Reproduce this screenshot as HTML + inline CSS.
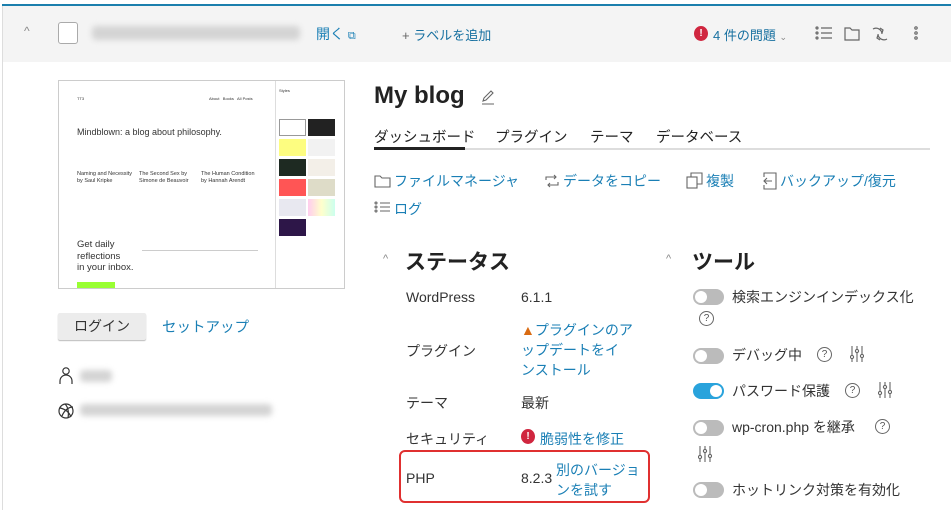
<!DOCTYPE html>
<html><head><meta charset="utf-8"><style>
*{margin:0;padding:0;box-sizing:border-box}
body{width:951px;height:510px;overflow:hidden;background:#fff;font-family:"Liberation Sans","Noto Sans CJK JP",sans-serif;color:#333;font-size:14px;position:relative}
.a{position:absolute;white-space:nowrap}
.l{color:#1a7fb5}
.blur{background:#d4d4d4;filter:blur(3px);border-radius:4px}
.tg{position:absolute;width:31px;height:16px;border-radius:8px;background:#bbb}
.tg::after{content:"";position:absolute;left:2px;top:2px;width:12px;height:12px;border-radius:50%;background:#fff}
.tg.on{background:#29a3dc}.tg.on::after{left:17px}
.q{position:absolute;width:15px;height:15px;border:1.2px solid #666;border-radius:50%;font-size:10px;line-height:13px;text-align:center;color:#555}
</style></head><body>
<div class="a" style="left:2px;top:4px;width:949px;height:2px;background:#1b7fad"></div>
<div class="a" style="left:2px;top:6px;width:949px;height:56px;background:#f4f4f4"></div>
<div class="a" style="left:2px;top:6px;width:1px;height:504px;background:#ddd"></div>
<div class="a" style="left:24px;top:24px;color:#888;font-size:12px">^</div>
<div class="a" style="left:58px;top:22px;width:20px;height:22px;border:1px solid #aaa;border-radius:3px;background:#fff"></div>
<div class="a blur" style="left:92px;top:26px;width:208px;height:14px"></div>
<div class="a l" style="left:316px;top:24px">開く <span style="font-size:11px">⧉</span></div>
<div class="a" style="left:402px;top:25px;font-size:13px"><span style="color:#666">+</span> <span class="l" style="color:#1770a0">ラベルを追加</span></div>
<div class="a" style="left:694px;top:26px;width:14px;height:15px;border-radius:50%;background:#d0263f;color:#fff;font-size:10px;text-align:center;line-height:15px;font-weight:bold">!</div>
<div class="a" style="left:713px;top:25px;font-size:13px;color:#1770a0">4 件の問題 <span style="color:#888;font-size:9px">⌄</span></div>
<svg class="a" style="left:814px;top:24px" width="105" height="20" fill="none" stroke="#666" stroke-width="1.2">
<circle cx="3" cy="4" r="1"/><circle cx="3" cy="9" r="1"/><circle cx="3" cy="14" r="1"/><path d="M7 4h11M7 9h11M7 14h11"/>
<path d="M31 4h5l2 2h7v10h-14z"/>
<path d="M59 5a6 6 0 0 1 9 5M73 15a6 6 0 0 1-9-5M66 4l3 2-1 3M66 16l-3-2 1-3"/>
<circle cx="102" cy="4" r="1.2"/><circle cx="102" cy="9" r="1.2"/><circle cx="102" cy="14" r="1.2"/>
</svg>
<!-- thumbnail -->
<div class="a" style="left:58px;top:80px;width:287px;height:209px;border:1px solid #ccc;background:#fff;overflow:hidden">
<div class="a" style="left:18px;top:15px;font-size:4px;color:#333">TT3</div>
<div class="a" style="left:150px;top:15px;font-size:4px;color:#333">About &nbsp; Books &nbsp; All Posts</div>
<div class="a" style="left:18px;top:46px;font-size:9px;color:#333">Mindblown: a blog about philosophy.</div>
<div class="a" style="left:18px;top:90px;font-size:5.5px;line-height:7px;color:#333">Naming and Necessity<br>by Saul Kripke</div>
<div class="a" style="left:80px;top:90px;font-size:5.5px;line-height:7px;color:#333">The Second Sex by<br>Simone de Beauvoir</div>
<div class="a" style="left:142px;top:90px;font-size:5.5px;line-height:7px;color:#333">The Human Condition<br>by Hannah Arendt</div>
<div class="a" style="left:18px;top:158px;font-size:9.5px;line-height:11.5px;color:#333">Get daily<br>reflections<br>in your inbox.</div>
<div class="a" style="left:83px;top:169px;width:116px;height:1px;background:#ccc"></div>
<div class="a" style="left:18px;top:201px;width:38px;height:7px;background:#9f3"></div>
<div class="a" style="left:216px;top:0;width:1px;height:209px;background:#ddd"></div>
<div class="a" style="left:220px;top:7px;font-size:4px">Styles</div>
<div class="a" style="left:220px;top:38px;width:27px;height:17px;border:1px solid #999"></div>
<div class="a" style="left:249px;top:38px;width:27px;height:17px;background:#222"></div>
<div class="a" style="left:220px;top:58px;width:27px;height:17px;background:#fdfd80"></div>
<div class="a" style="left:249px;top:58px;width:27px;height:17px;background:#f2f2f2"></div>
<div class="a" style="left:220px;top:78px;width:27px;height:17px;background:#1e2a22"></div>
<div class="a" style="left:249px;top:78px;width:27px;height:17px;background:#f3efe8"></div>
<div class="a" style="left:220px;top:98px;width:27px;height:17px;background:#f55"></div>
<div class="a" style="left:249px;top:98px;width:27px;height:17px;background:#dedcc8"></div>
<div class="a" style="left:220px;top:118px;width:27px;height:17px;background:#e8e8f0"></div>
<div class="a" style="left:249px;top:118px;width:27px;height:17px;background:linear-gradient(90deg,#fce,#ffc,#cfe)"></div>
<div class="a" style="left:220px;top:138px;width:27px;height:17px;background:#2d1648"></div>
</div>
<div class="a" style="left:58px;top:313px;width:88px;height:27px;background:#ececec;border-radius:2px;box-shadow:0 1px 1px #bbb;text-align:center;line-height:27px;color:#333">ログイン</div>
<div class="a l" style="left:162px;top:316px;font-size:14.5px">セットアップ</div>
<svg class="a" style="left:58px;top:367px" width="16" height="52" fill="none" stroke="#333" stroke-width="1.2"><circle cx="8" cy="4" r="3.2"/><path d="M2 17v-3a6 6 0 0 1 12 0v3"/><circle cx="8" cy="44" r="7"/><path d="M2 41c5 1 9 4 11 9M4 49c2-5 6-9 11-9M7 37c3 3 4 8 3 14"/></svg>
<div class="a blur" style="left:80px;top:370px;width:32px;height:12px"></div>
<div class="a blur" style="left:80px;top:404px;width:192px;height:12px"></div>
<!-- right -->
<div class="a" style="left:374px;top:82px;font-size:24px;font-weight:bold;color:#222">My blog</div>
<svg class="a" style="left:480px;top:89px" width="16" height="16" fill="none" stroke="#666" stroke-width="1.1"><path d="M3 12l1-3 7-7 2 2-7 7zM2 15h12"/></svg>
<div class="a" style="left:374px;top:126px;font-size:14.5px;color:#222">ダッシュボード</div>
<div class="a" style="left:495px;top:126px;font-size:14.5px;color:#222">プラグイン</div>
<div class="a" style="left:590px;top:126px;font-size:14.5px;color:#222">テーマ</div>
<div class="a" style="left:656px;top:126px;font-size:14.5px;color:#222">データベース</div>
<div class="a" style="left:374px;top:148px;width:556px;height:2px;background:#ddd"></div>
<div class="a" style="left:374px;top:147px;width:91px;height:3px;background:#222"></div>
<svg class="a" style="left:374px;top:172px" width="18" height="48" fill="none" stroke="#666" stroke-width="1.1"><path d="M1 4h5l2 2h8v9H1z"/><circle cx="2" cy="31" r="1"/><circle cx="2" cy="35" r="1"/><circle cx="2" cy="39" r="1"/><path d="M6 31h10M6 35h10M6 39h10"/></svg>
<div class="a l" style="left:394px;top:171px">ファイルマネージャ</div>
<svg class="a" style="left:543px;top:172px" width="18" height="18" fill="none" stroke="#666" stroke-width="1.1"><path d="M3 8V5h10M11 3l2 2-2 2M15 10v3H5M7 11l-2 2 2 2"/></svg>
<div class="a l" style="left:563px;top:171px">データをコピー</div>
<svg class="a" style="left:686px;top:172px" width="18" height="18" fill="none" stroke="#666" stroke-width="1.1"><rect x="1" y="5" width="10" height="11"/><path d="M5 5V1h11v11h-5"/></svg>
<div class="a l" style="left:706px;top:171px">複製</div>
<svg class="a" style="left:760px;top:172px" width="18" height="18" fill="none" stroke="#666" stroke-width="1.1"><path d="M4 5V1h12v16H4v-4M12 9H4M7 6L4 9l3 3"/></svg>
<div class="a l" style="left:780px;top:171px">バックアップ/復元</div>
<div class="a l" style="left:394px;top:199px">ログ</div>
<div class="a" style="left:383px;top:253px;color:#888;font-size:11px">^</div>
<div class="a" style="left:405px;top:246px;font-size:21px;font-weight:bold;color:#222">ステータス</div>
<div class="a" style="left:666px;top:253px;color:#888;font-size:11px">^</div>
<div class="a" style="left:692px;top:246px;font-size:21px;font-weight:bold;color:#222">ツール</div>
<div class="a" style="left:406px;top:289px">WordPress</div><div class="a" style="left:521px;top:289px">6.1.1</div>
<div class="a" style="left:406px;top:341px">プラグイン</div>
<div class="a" style="left:521px;top:320px;line-height:20px"><span style="color:#d96b12">▲</span><span class="l">プラグインのア<br>ップデートをイ<br>ンストール</span></div>
<div class="a" style="left:406px;top:393px">テーマ</div><div class="a" style="left:521px;top:393px">最新</div>
<div class="a" style="left:406px;top:429px">セキュリティ</div>
<div class="a" style="left:521px;top:429px;width:14px;height:15px;border-radius:50%;background:#d0263f;color:#fff;font-size:10px;text-align:center;line-height:15px;font-weight:bold">!</div>
<div class="a l" style="left:540px;top:429px">脆弱性を修正</div>
<div class="a" style="left:399px;top:450px;width:251px;height:53px;border:2px solid #e03030;border-radius:6px"></div>
<div class="a" style="left:406px;top:470px">PHP</div><div class="a" style="left:521px;top:470px">8.2.3</div>
<div class="a l" style="left:556px;top:460px;line-height:20px">別のバージョ<br>ンを試す</div>
<div class="tg" style="left:693px;top:289px"></div><div class="a" style="left:732px;top:287px">検索エンジンインデックス化</div>
<div class="q" style="left:699px;top:311px">?</div>
<div class="tg" style="left:693px;top:348px"></div><div class="a" style="left:732px;top:345px">デバッグ中</div><div class="q" style="left:817px;top:347px">?</div>
<svg class="a" style="left:850px;top:345px" width="14" height="18" fill="none" stroke="#666" stroke-width="1.1"><path d="M2 1v16M7 1v16M12 1v16"/><circle cx="2" cy="12" r="1.6" fill="#fff"/><circle cx="7" cy="6" r="1.6" fill="#fff"/><circle cx="12" cy="11" r="1.6" fill="#fff"/></svg>
<div class="tg on" style="left:693px;top:383px"></div><div class="a" style="left:732px;top:381px">パスワード保護</div><div class="q" style="left:845px;top:383px">?</div>
<svg class="a" style="left:878px;top:381px" width="14" height="18" fill="none" stroke="#666" stroke-width="1.1"><path d="M2 1v16M7 1v16M12 1v16"/><circle cx="2" cy="12" r="1.6" fill="#fff"/><circle cx="7" cy="6" r="1.6" fill="#fff"/><circle cx="12" cy="11" r="1.6" fill="#fff"/></svg>
<div class="tg" style="left:693px;top:420px"></div><div class="a" style="left:732px;top:417px">wp-cron.php を継承</div><div class="q" style="left:875px;top:419px">?</div>
<svg class="a" style="left:698px;top:445px" width="14" height="18" fill="none" stroke="#666" stroke-width="1.1"><path d="M2 1v16M7 1v16M12 1v16"/><circle cx="2" cy="12" r="1.6" fill="#fff"/><circle cx="7" cy="6" r="1.6" fill="#fff"/><circle cx="12" cy="11" r="1.6" fill="#fff"/></svg>
<div class="tg" style="left:693px;top:482px"></div><div class="a" style="left:732px;top:480px">ホットリンク対策を有効化</div>
</body></html>
